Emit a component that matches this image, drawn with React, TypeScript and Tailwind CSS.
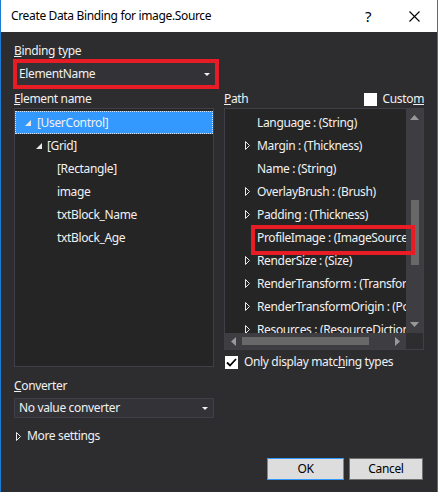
import { ReactNode } from "react";

const FONT = "font-['Noto_Sans','Open_Sans',sans-serif]";

const TreeTri = () => (
  <svg width="6" height="6" viewBox="0 0 6 6" className="shrink-0">
    <polygon points="6,0 6,6 0,6" fill="#e8e8e8" />
  </svg>
);

const OpenTri = () => (
  <svg width="5" height="9" viewBox="0 0 5 9" className="shrink-0">
    <polygon points="0.5,0.5 4.5,4.5 0.5,8.5" fill="none" stroke="#e8e8e8" strokeWidth="1" />
  </svg>
);

const DropArrow = () => (
  <svg width="6" height="3" viewBox="0 0 6 3" className="ml-auto shrink-0">
    <polygon points="0,0 6,0 3,3" fill="#f1f1f1" />
  </svg>
);

interface PathRowProps {
  expandable?: boolean;
  children: ReactNode;
}

const PathRow: React.FC<PathRowProps> = ({ expandable, children }) => (
  <div className="flex h-[23px] shrink-0 items-center whitespace-nowrap pl-[20px]">
    <div className="flex w-[12px] shrink-0 items-center">{expandable && <OpenTri />}</div>
    <span>{children}</span>
  </div>
);

const paths: [string, boolean][] = [
  ["Language : (String)", false],
  ["Margin : (Thickness)", true],
  ["Name : (String)", false],
  ["OverlayBrush : (Brush)", true],
  ["Padding : (Thickness)", true],
  ["ProfileImage : (ImageSource)", false],
  ["RenderSize : (Size)", true],
  ["RenderTransform : (Transform)", true],
  ["RenderTransformOrigin : (Point)", true],
  ["Resources : (ResourceDictionary)", true],
];

export default function App() {
  return (
    <div
      className={`flex h-[492px] w-[438px] flex-col border-x border-[#1c7cd5] bg-[#2d2d30] text-[12px] leading-[16px] tracking-[-0.35px] text-[#f1f1f1] ${FONT}`}
    >
      {/* title bar */}
      <div className="flex h-[32px] shrink-0 items-center bg-white text-black">
        <span className="pl-[10px]">Create Data Binding for image.Source</span>
        <div className="ml-auto flex h-full">
          <div className="flex w-[46px] items-center justify-center text-[15px]">?</div>
          <div className="flex w-[46px] items-center justify-center">
            <svg width="11" height="11" viewBox="0 0 11 11">
              <path d="M0.5 0.5 L10.5 10.5 M10.5 0.5 L0.5 10.5" stroke="#000" strokeWidth="1.1" />
            </svg>
          </div>
        </div>
      </div>

      <div className="flex flex-1 flex-col px-[13px]">
        <div className="mt-[11px] h-[16px]">
          <u>B</u>inding type
        </div>
        <div className="-ml-[1px] h-[30px] w-[206px] border-4 border-[#e81c24]">
          <div className="flex h-full items-center bg-[#333337] pl-[2px] pr-[5px]">
            <span>ElementName</span>
            <DropArrow />
          </div>
        </div>

        <div className="mt-[1px] grid grid-cols-[200px_200px] gap-x-[10px]">
          <div className="flex h-[18px] items-center">
            <u>E</u>lement name
          </div>
          <div className="flex h-[18px] items-center">
            <span>
              <u>P</u>ath
            </span>
            <div className="ml-auto flex items-center gap-[6px]">
              <div className="h-[13px] w-[13px] bg-white" />
              <span>
                Custo<u>m</u>
              </span>
            </div>
          </div>

          {/* element tree */}
          <div className="h-[259px] border border-[#3f3f46] bg-[#252526] pt-[2px]">
            <div className="flex h-[23px] items-center border border-dotted border-[#cfe4ff] bg-[#3399ff] pl-[9px]">
              <TreeTri />
              <span className="ml-[6px]">[UserControl]</span>
            </div>
            <div className="flex h-[23px] items-center pl-[21px]">
              <TreeTri />
              <span className="ml-[5px]">[Grid]</span>
            </div>
            {["[Rectangle]", "image", "txtBlock_Name", "txtBlock_Age"].map((n) => (
              <div key={n} className="flex h-[23px] items-center pl-[42px]">
                {n}
              </div>
            ))}
          </div>

          {/* path list */}
          <div className="flex h-[259px] flex-col">
            <div className="relative flex h-[242px] flex-col border border-[#3f3f46] bg-[#252526]">
              <div className="flex h-[224px]">
                <div className="flex flex-1 flex-col overflow-hidden pt-[2px]">
                  {paths.map(([p, e]) => (
                    <PathRow key={p} expandable={e}>
                      {p}
                    </PathRow>
                  ))}
                </div>
                <div className="flex w-[17px] flex-col bg-[#3e3e42]">
                  <div className="flex h-[17px] items-center justify-center">
                    <svg width="9" height="5" viewBox="0 0 9 5">
                      <polygon points="0,5 9,5 4.5,0" fill="#999999" />
                    </svg>
                  </div>
                  <div className="h-[74px]" />
                  <div className="mx-auto h-[65px] w-[8px] bg-[#686868]" />
                  <div className="flex-1" />
                  <div className="flex h-[17px] items-center justify-center">
                    <svg width="9" height="5" viewBox="0 0 9 5">
                      <polygon points="0,0 9,0 4.5,5" fill="#999999" />
                    </svg>
                  </div>
                </div>
              </div>
              <div className="flex h-[16px]">
                <div className="flex flex-1 items-center bg-[#3e3e42]">
                  <div className="flex w-[17px] justify-center">
                    <svg width="5" height="9" viewBox="0 0 5 9">
                      <polygon points="5,0 5,9 0,4.5" fill="#999999" />
                    </svg>
                  </div>
                  <div className="h-[8px] w-[127px] bg-[#686868]" />
                  <div className="flex-1" />
                  <div className="flex w-[17px] justify-center">
                    <svg width="5" height="9" viewBox="0 0 5 9">
                      <polygon points="0,0 0,9 5,4.5" fill="#999999" />
                    </svg>
                  </div>
                </div>
                <div className="w-[17px] bg-[#2d2d30]" />
              </div>
              <div className="absolute left-[26px] top-[116px] h-[30px] w-[164px] border-4 border-[#e81c24]" />
            </div>
            <div className="mt-[5px] flex h-[14px] items-center gap-[6px] pl-[1px]">
              <div className="flex h-[13px] w-[13px] items-center justify-center bg-white">
                <svg width="11" height="9" viewBox="0 0 11 9">
                  <path d="M1 4.5 L4 7.5 L10 1" fill="none" stroke="#000" strokeWidth="1.8" />
                </svg>
              </div>
              <span>
                Only display matc<u>h</u>ing types
              </span>
            </div>
          </div>
        </div>

        <div className="mt-[11px] h-[16px]">
          <u>C</u>onverter
        </div>
        <div className="mt-[4px] flex h-[20px] w-[200px] items-center border border-[#3f3f46] bg-[#333337] pl-[4px] pr-[5px]">
          <span>No value converter</span>
          <DropArrow />
        </div>

        <div className="mt-[10px] flex h-[16px] items-center gap-[6px] pl-[2px]">
          <OpenTri />
          <span>More settings</span>
        </div>

        <div className="mt-[14px] flex justify-end gap-[5px] pr-[1px] text-black">
          <button className="h-[22px] w-[77px] border border-[#3399ff] bg-[#dddddd]">OK</button>
          <button className="h-[22px] w-[74px] border border-[#707070] bg-[#dddddd]">Cancel</button>
        </div>
      </div>
    </div>
  );
}
